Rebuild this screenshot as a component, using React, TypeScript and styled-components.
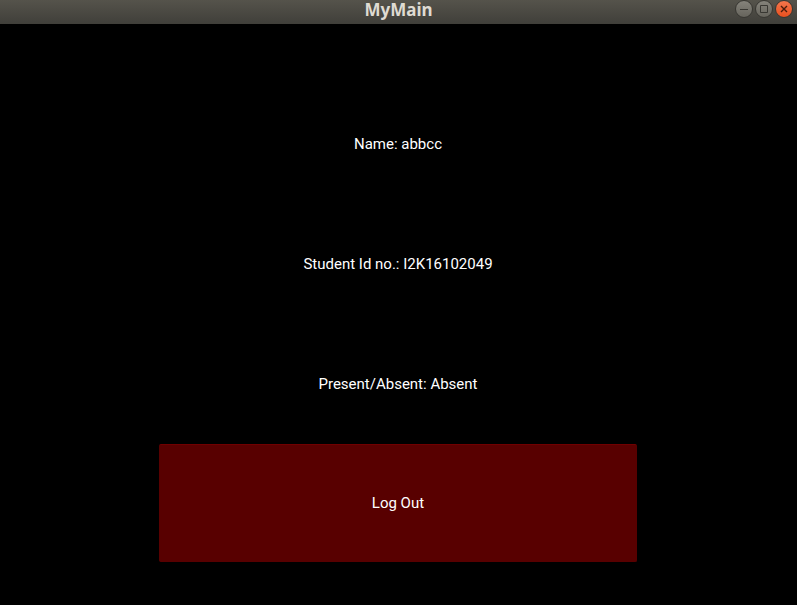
import React from "react";
import styled, { createGlobalStyle } from "styled-components";

const GlobalStyle = createGlobalStyle`
  * { box-sizing: border-box; }
  html, body { margin: 0; background: #000; }
`;

const Window = styled.div`
  min-height: 100vh;
  display: flex;
  flex-direction: column;
  background: #000;
  color: #fff;
  font-family: Roboto, sans-serif;
`;

const TitleBar = styled.header`
  display: grid;
  grid-template-columns: 1fr auto 1fr;
  align-items: start;
  height: 24px;
  padding: 0 4px;
  background: linear-gradient(#55534b, #403f3a);
`;

const Title = styled.h1`
  grid-column: 2;
  margin: 0;
  font: 700 17px/20px "Noto Sans", sans-serif;
  color: #dfdbd2;
`;

const Controls = styled.div`
  display: flex;
  justify-content: flex-end;
  gap: 2px;
`;

const ControlButton = styled.button<{ $close?: boolean }>`
  display: grid;
  place-items: center;
  width: 18px;
  height: 18px;
  padding: 0;
  border: 1px solid #383732;
  border-radius: 50%;
  color: ${(p) => (p.$close ? "#4a1c0c" : "#383732")};
  background: ${(p) =>
    p.$close ? "linear-gradient(#f4764c, #e8501f)" : "linear-gradient(#85837b, #66645c)"};
`;

const Content = styled.main`
  flex: 1;
  display: grid;
  grid-template-columns: 1fr 3fr 1fr;
  grid-template-rows: repeat(4, 1fr);
  padding: 60px 1px 41px 0;
`;

const Label = styled.p`
  grid-column: 2;
  place-self: center;
  margin: 0;
  font-size: 15px;
  line-height: 18px;
`;

const LogOutButton = styled.button`
  grid-column: 2;
  margin-bottom: 2px;
  border: 1px solid #580000;
  border-top-color: #700000;
  border-radius: 2px;
  background: #580000;
  color: #fff;
  font: 15px/18px Roboto, sans-serif;
`;

const details = ["Name: abbcc", "Student Id no.: I2K16102049", "Present/Absent: Absent"];

export default function App() {
  return (
    <Window>
      <GlobalStyle />
      <TitleBar>
        <Title>MyMain</Title>
        <Controls>
          <ControlButton aria-label="Minimize">
            <svg width="16" height="16" stroke="currentColor"><path d="M4 8.500h8" /></svg>
          </ControlButton>
          <ControlButton aria-label="Maximize">
            <svg width="16" height="16" fill="none" stroke="currentColor"><path d="M4.500 4.500h7v7h-7z" /></svg>
          </ControlButton>
          <ControlButton aria-label="Close" $close>
            <svg width="16" height="16" stroke="currentColor" strokeWidth="1.400"><path d="M5 5l6 6M11 5l-6 6" /></svg>
          </ControlButton>
        </Controls>
      </TitleBar>
      <Content>
        {details.map((text) => (
          <Label key={text}>{text}</Label>
        ))}
        <LogOutButton>Log Out</LogOutButton>
      </Content>
    </Window>
  );
}
